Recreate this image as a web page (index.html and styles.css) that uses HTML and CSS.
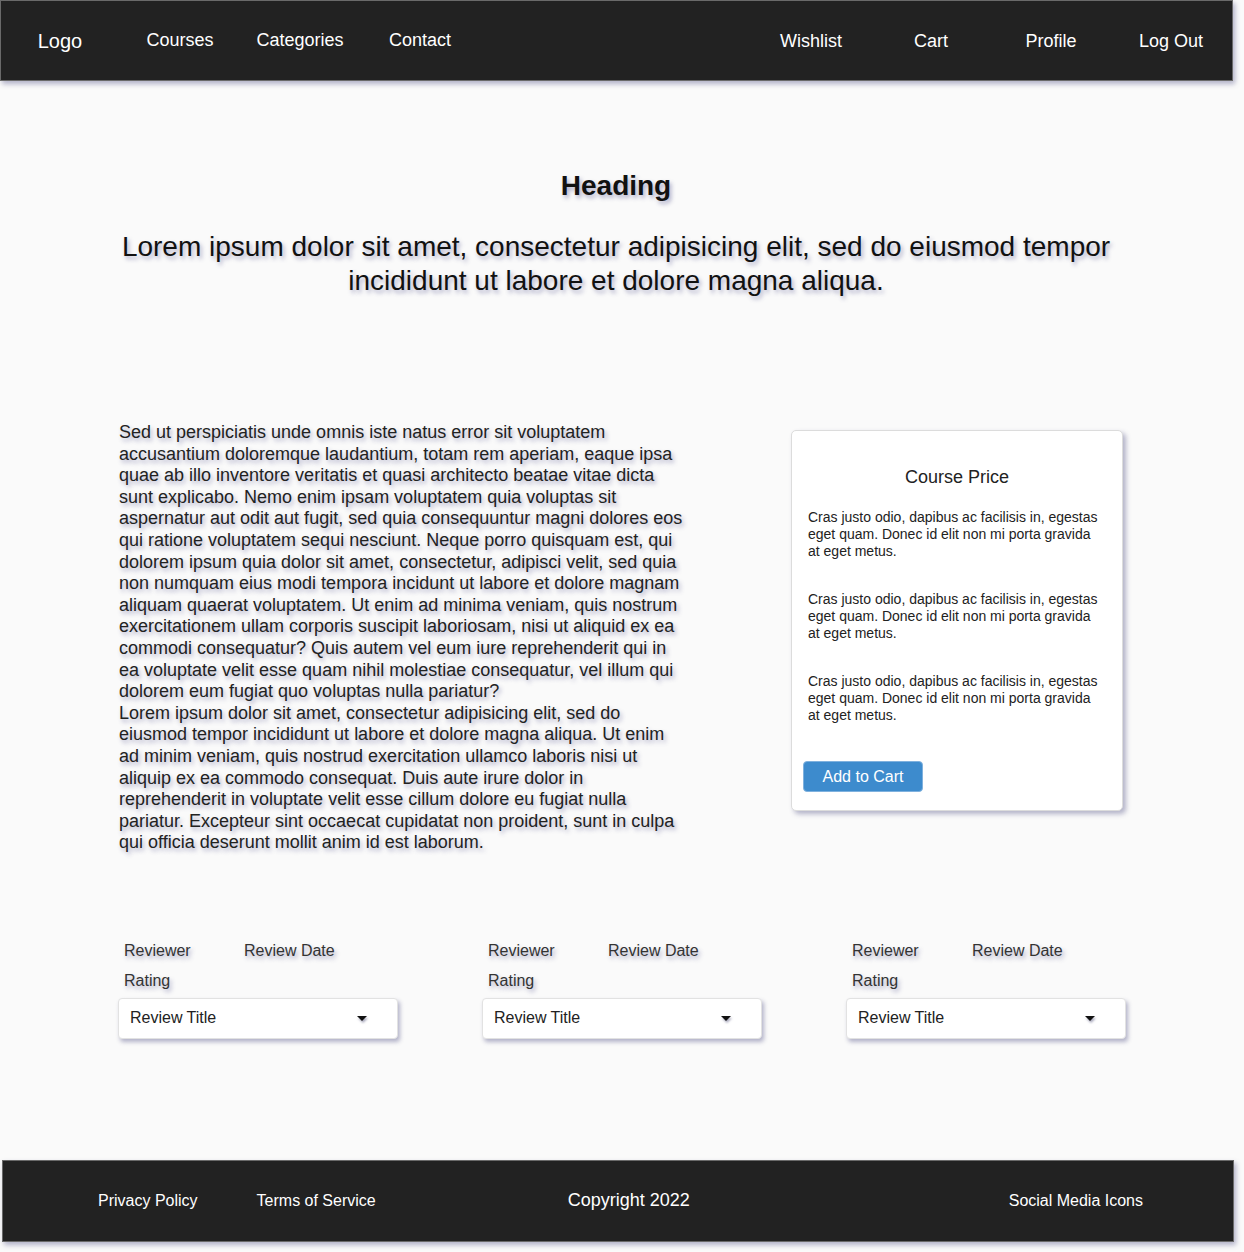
FILE: index.html
```html
<!DOCTYPE html>
<html lang="en">
<head>
<meta charset="utf-8">
<title>Course</title>
<link rel="stylesheet" href="styles.css">
</head>
<body>
<div class="page">
  <header class="topbar">
    <nav class="nav nav-left">
      <a class="nav-item logo">Logo</a>
      <a class="nav-item">Courses</a>
      <a class="nav-item">Categories</a>
      <a class="nav-item">Contact</a>
    </nav>
    <nav class="nav nav-right">
      <a class="nav-item">Wishlist</a>
      <a class="nav-item">Cart</a>
      <a class="nav-item">Profile</a>
      <a class="nav-item">Log Out</a>
    </nav>
  </header>

  <section class="hero">
    <h1 class="hero-title">Heading</h1>
    <p class="hero-lead">Lorem ipsum dolor sit amet, consectetur adipisicing elit, sed do eiusmod tempor incididunt ut labore et dolore magna aliqua.</p>
  </section>

  <section class="main">
    <div class="desc">
      <p>Sed ut perspiciatis unde omnis iste natus error sit voluptatem accusantium doloremque laudantium, totam rem aperiam, eaque ipsa quae ab illo inventore veritatis et quasi architecto beatae vitae dicta sunt explicabo. Nemo enim ipsam voluptatem quia voluptas sit aspernatur aut odit aut fugit, sed quia consequuntur magni dolores eos qui ratione voluptatem sequi nesciunt. Neque porro quisquam est, qui dolorem ipsum quia dolor sit amet, consectetur, adipisci velit, sed quia non numquam eius modi tempora incidunt ut labore et dolore magnam aliquam quaerat voluptatem. Ut enim ad minima veniam, quis nostrum exercitationem ullam corporis suscipit laboriosam, nisi ut aliquid ex ea commodi consequatur? Quis autem vel eum iure reprehenderit qui in ea voluptate velit esse quam nihil molestiae consequatur, vel illum qui dolorem eum fugiat quo voluptas nulla pariatur?</p>
      <p>Lorem ipsum dolor sit amet, consectetur adipisicing elit, sed do eiusmod tempor incididunt ut labore et dolore magna aliqua. Ut enim ad minim veniam, quis nostrud exercitation ullamco laboris nisi ut aliquip ex ea commodo consequat. Duis aute irure dolor in reprehenderit in voluptate velit esse cillum dolore eu fugiat nulla pariatur. Excepteur sint occaecat cupidatat non proident, sunt in culpa qui officia deserunt mollit anim id est laborum.</p>
    </div>
    <aside class="card">
      <h2 class="card-title">Course Price</h2>
      <p class="card-text">Cras justo odio, dapibus ac facilisis in, egestas eget quam. Donec id elit non mi porta gravida at eget metus.</p>
      <p class="card-text">Cras justo odio, dapibus ac facilisis in, egestas eget quam. Donec id elit non mi porta gravida at eget metus.</p>
      <p class="card-text">Cras justo odio, dapibus ac facilisis in, egestas eget quam. Donec id elit non mi porta gravida at eget metus.</p>
      <button class="btn">Add to Cart</button>
    </aside>
  </section>

  <section class="reviews">
    <div class="review">
      <div class="review-meta"><span class="reviewer">Reviewer</span><span>Review Date</span></div>
      <div class="review-rating">Rating</div>
      <div class="review-box"><span>Review Title</span><span class="caret"></span></div>
    </div>
    <div class="review">
      <div class="review-meta"><span class="reviewer">Reviewer</span><span>Review Date</span></div>
      <div class="review-rating">Rating</div>
      <div class="review-box"><span>Review Title</span><span class="caret"></span></div>
    </div>
    <div class="review">
      <div class="review-meta"><span class="reviewer">Reviewer</span><span>Review Date</span></div>
      <div class="review-rating">Rating</div>
      <div class="review-box"><span>Review Title</span><span class="caret"></span></div>
    </div>
  </section>

  <footer class="footer">
    <a class="foot-link">Privacy Policy</a>
    <a class="foot-link terms">Terms of Service</a>
    <span class="copyright">Copyright 2022</span>
    <a class="foot-link social">Social Media Icons</a>
  </footer>
</div>
</body>
</html>
```

FILE: styles.css
```css
* { box-sizing: border-box; }

html, body {
  margin: 0;
  padding: 0;
  background: #fafafa;
}

body {
  font-family: "Liberation Sans", Arial, sans-serif;
  color: #1e1e1e;
}

.page {
  width: 1244px;
  min-height: 1252px;
  display: flex;
  flex-direction: column;
}

.topbar {
  width: 1233px;
  height: 81px;
  background: #222222;
  border: 1px solid #6a6a6a;
  display: flex;
  justify-content: space-between;
  align-items: center;
  padding: 0 1px 0 0;
  box-shadow: 2px 3px 5px rgba(90, 90, 140, 0.45);
}

.nav {
  display: flex;
}

.nav-left {
  margin-left: -1px;
}

.nav-item {
  width: 120px;
  text-align: center;
  color: #ffffff;
  font-size: 18px;
  line-height: 20px;
}

.logo {
  font-size: 20px;
  margin-top: 1px;
}

.hero {
  text-align: center;
  width: 1232px;
  padding-top: 89px;
  text-shadow: 2px 3px 4px rgba(80, 80, 140, 0.45);
}

.hero-title {
  margin: 0;
  font-size: 28px;
  line-height: 32px;
  font-weight: bold;
  color: #111;
}

.hero-lead {
  margin: 28px auto 0;
  width: 1010px;
  font-size: 28px;
  line-height: 34px;
  color: #111;
}

.main {
  display: flex;
  align-items: flex-start;
  padding-left: 119px;
  margin-top: 124px;
}

.desc {
  width: 570px;
  font-size: 18px;
  line-height: 21.6px;
  color: #222;
  text-shadow: 2px 3px 4px rgba(80, 80, 140, 0.45);
}

.desc p {
  margin: 0;
}

.card {
  margin-left: 102px;
  margin-top: 8px;
  width: 332px;
  height: 381px;
  background: #ffffff;
  border: 1px solid #dcdcdc;
  border-radius: 5px;
  box-shadow: 3px 3px 5px rgba(90, 90, 140, 0.45);
  padding: 35px 16px 0 16px;
}

.card-title {
  margin: 0;
  text-align: center;
  font-size: 18px;
  font-weight: normal;
  line-height: 22px;
  color: #222;
}

.card-text {
  margin: 21px 0 0;
  font-size: 14px;
  line-height: 17px;
  color: #222;
}

.card-text + .card-text {
  margin-top: 31px;
}

.btn {
  display: block;
  margin: 37px 0 0 -5px;
  width: 120px;
  height: 31px;
  border: 1px solid #7fb1de;
  border-radius: 4px;
  background: #3d8bcd;
  color: #ffffff;
  font-family: "Liberation Sans", Arial, sans-serif;
  font-size: 16px;
  padding: 0;
}

.reviews {
  display: grid;
  grid-template-columns: repeat(3, 280px);
  column-gap: 84px;
  padding-left: 118px;
  margin-top: 87px;
}

.review {
  font-size: 16px;
  color: #333;
}

.review-meta,
.review-rating {
  padding-left: 6px;
  line-height: 20px;
  text-shadow: 2px 3px 4px rgba(80, 80, 140, 0.45);
}

.reviewer {
  display: inline-block;
  width: 120px;
}

.review-rating {
  margin-top: 10px;
}

.review-box {
  margin-top: 7px;
  height: 41px;
  background: #ffffff;
  border: 1px solid #e2e2e2;
  border-radius: 4px;
  box-shadow: 2px 3px 4px rgba(90, 90, 140, 0.45);
  display: flex;
  align-items: center;
  justify-content: space-between;
  padding: 0 30px 0 11px;
  color: #222;
}

.caret {
  width: 0;
  height: 0;
  border-left: 5px solid transparent;
  border-right: 5px solid transparent;
  border-top: 5px solid #111;
  filter: drop-shadow(1px 2px 1px rgba(80, 80, 120, 0.5));
}

.footer {
  margin-top: 121px;
  margin-left: 2px;
  width: 1232px;
  height: 82px;
  background: #222222;
  border: 1px solid #6a6a6a;
  box-shadow: 2px 3px 5px rgba(90, 90, 140, 0.45);
  display: flex;
  align-items: center;
  padding: 0 90px 0 95px;
  color: #ffffff;
}

.foot-link {
  font-size: 16px;
  color: #ffffff;
}

.terms {
  margin-left: 59px;
}

.copyright {
  font-size: 18px;
  margin-left: 192px;
}

.social {
  margin-left: auto;
}
```
